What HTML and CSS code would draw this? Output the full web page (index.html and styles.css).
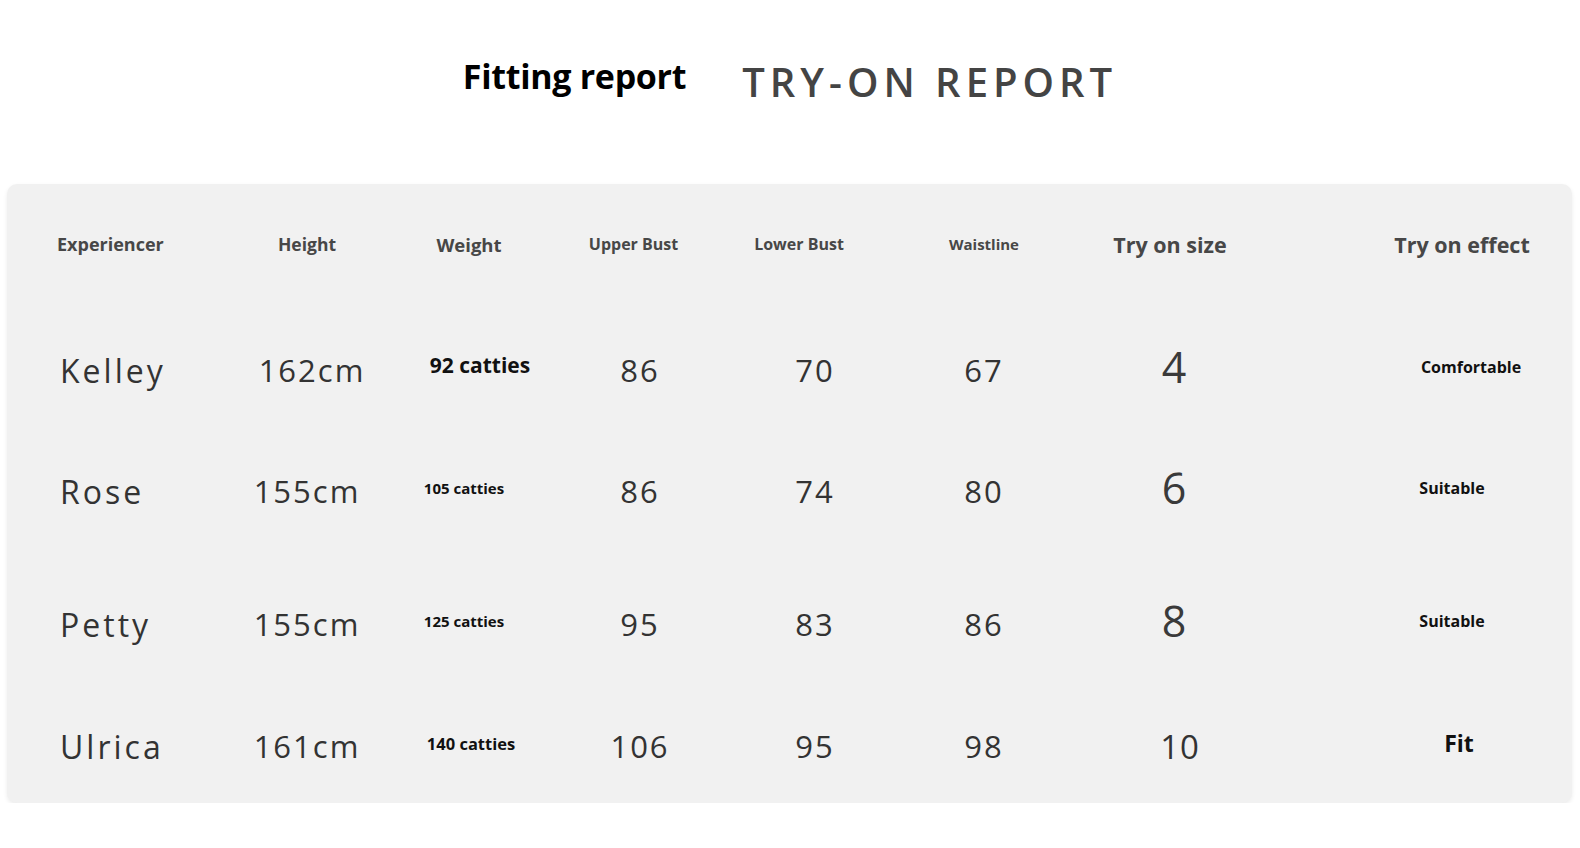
FILE: index.html
```html
<!DOCTYPE html>
<html lang="en">
<head>
<meta charset="utf-8">
<title>Fitting report</title>
<link rel="stylesheet" href="styles.css">
</head>
<body>
<header class="title-bar">
  <h1 class="title-main">Fitting report</h1>
  <h2 class="title-sub">TRY-ON REPORT</h2>
</header>
<section class="card">
  <div class="table">
    <div class="th c-name">Experiencer</div>
    <div class="th">Height</div>
    <div class="th th-wt">Weight</div>
    <div class="th th-sm th-ub">Upper Bust</div>
    <div class="th th-sm th-lb">Lower Bust</div>
    <div class="th th-xs">Waistline</div>
    <div class="th th-lg th-size">Try on size</div>
    <div class="th th-lg c-eff th-eff">Try on effect</div>

    <div class="td c-name name">Kelley</div>
    <div class="td num num-r">162cm</div>
    <div class="td wt wt-lg">92 catties</div>
    <div class="td num">86</div>
    <div class="td num">70</div>
    <div class="td num">67</div>
    <div class="td size">4</div>
    <div class="td eff c-eff eff-comf">Comfortable</div>

    <div class="td c-name name">Rose</div>
    <div class="td num">155cm</div>
    <div class="td wt">105 catties</div>
    <div class="td num">86</div>
    <div class="td num">74</div>
    <div class="td num">80</div>
    <div class="td size">6</div>
    <div class="td eff c-eff eff-suit">Suitable</div>

    <div class="td c-name name">Petty</div>
    <div class="td num">155cm</div>
    <div class="td wt">125 catties</div>
    <div class="td num">95</div>
    <div class="td num">83</div>
    <div class="td num">86</div>
    <div class="td size">8</div>
    <div class="td eff c-eff eff-suit">Suitable</div>

    <div class="td c-name name">Ulrica</div>
    <div class="td num">161cm</div>
    <div class="td wt wt-md">140 catties</div>
    <div class="td num">106</div>
    <div class="td num">95</div>
    <div class="td num">98</div>
    <div class="td num num-size">10</div>
    <div class="td eff eff-lg c-eff">Fit</div>
  </div>
</section>
</body>
</html>
```

FILE: styles.css
```css
* { box-sizing: border-box; }

body {
  margin: 0;
  background: #ffffff;
  font-family: "Open Sans", "Noto Sans", sans-serif;
  color: #333333;
}

.title-bar {
  height: 184px;
  display: flex;
  justify-content: center;
  align-items: flex-start;
  gap: 56px;
  padding-top: 59px;
}

.title-main {
  margin: 0;
  font-size: 34px;
  line-height: 1;
  font-weight: 700;
  color: #000000;
  letter-spacing: -0.3px;
}

.title-sub {
  margin: 3px 0 0;
  font-size: 40px;
  line-height: 1;
  font-weight: 600;
  color: #444444;
  letter-spacing: 5px;
}

.card {
  margin: 0 8px 0 7px;
  background: #f1f1f1;
  border-radius: 10px;
  box-shadow: 0 2px 4px rgba(0, 0, 0, 0.08);
  padding-bottom: 13px;
}

.table {
  display: grid;
  grid-template-columns: 213px 174px 140px 212px 138px 200px 180px 1fr;
  grid-template-rows: 120px 132px 110px 156px 88px;
  align-items: center;
}

.th, .td {
  text-align: center;
  white-space: nowrap;
}

.c-name { text-align: left; padding-left: 53px; }
.c-eff { padding-left: 82px; }

.th {
  font-size: 17.5px;
  font-weight: 700;
  color: #474747;
}
.th.c-name { padding-left: 50px; font-size: 18px; }
.th-wt { font-size: 18.5px; padding-left: 10px; }
.th-sm { font-size: 16px; }
.th-xs { font-size: 15px; }
.th-lg { font-size: 21.5px; }
.th-ub { padding-right: 13px; }
.th-lb { padding-right: 32px; }
.th-size { padding-right: 8px; }
.th-eff { padding-left: 88px; }

.name {
  font-size: 32px;
  font-weight: 500;
  letter-spacing: 3px;
  color: #333333;
}

.num {
  font-size: 31px;
  font-weight: 400;
  letter-spacing: 2px;
  color: #333333;
}
.num-r { padding-left: 10px; }
.num-size { font-size: 33px; letter-spacing: 1px; padding-left: 12px; }

.wt {
  font-size: 15px;
  font-weight: 700;
  color: #111111;
  padding-bottom: 6px;
}
.wt-lg { font-size: 21px; padding-bottom: 10px; padding-left: 32px; }
.wt-md { font-size: 16.5px; padding-left: 14px; }

.size {
  font-size: 43px;
  font-weight: 400;
  color: #3a3a3a;
  padding-bottom: 8px;
}

.eff {
  font-size: 16px;
  font-weight: 700;
  color: #111111;
  padding-bottom: 6px;
}
.eff-comf { padding-left: 106px; }
.eff-suit { padding-left: 68px; }
.eff-lg { font-size: 23px; }
```
